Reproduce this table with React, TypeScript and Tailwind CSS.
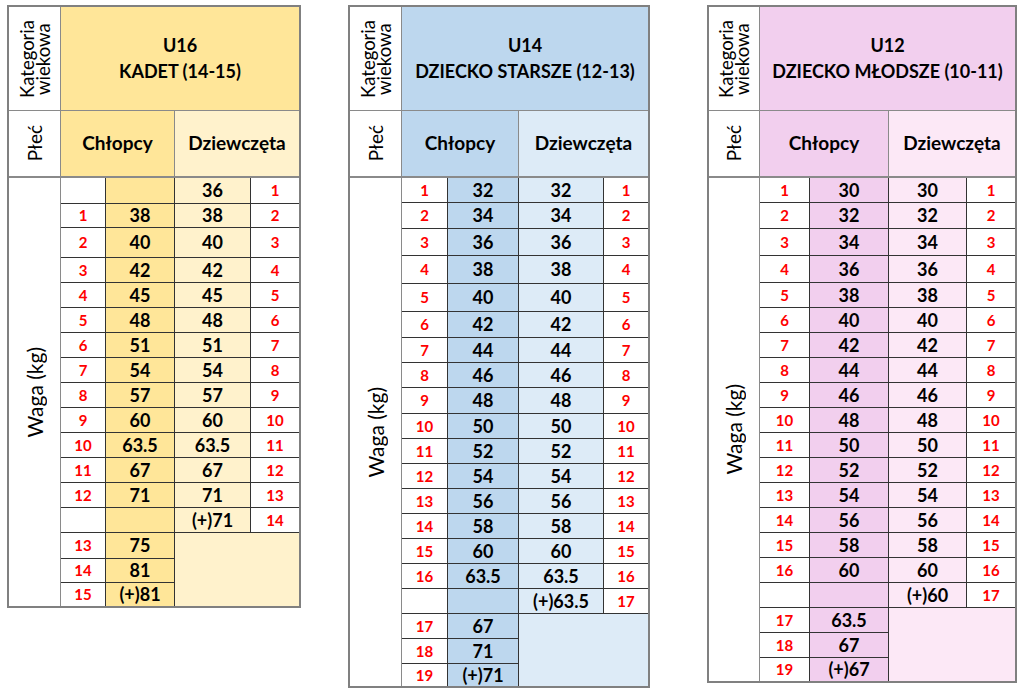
import React from "react";

type Row = [string, string, string, string];

interface Spec {
  title: string;
  subtitle: string;
  gridClass: string;
  spanClass: string;
  headBg: string;
  boysBg: string;
  girlsBg: string;
  rows: Row[];
  extra: [string, string][];
}

const BORDER_DATA = "border-[#333333]";
const BORDER_HEAD = "border-[#8a8a8a]";
const RED = "text-[15px] font-bold text-[#ff0000]";
const VAL = "text-[18px] font-bold text-black";

function Table({ s, className }: { s: Spec; className: string }) {
  const totalExtra = s.extra.length;
  return (
    <div className={`grid border-2 border-[#808080] ${s.gridClass} ${className}`}>
      {/* header row 1 */}
      <div className={`flex items-center justify-center border-r border-b ${BORDER_HEAD} bg-white`}>
        <div className="rotate-180 [writing-mode:vertical-rl] text-[18.5px] leading-[16px] text-center text-black">
          Kategoria
          <br />
          wiekowa
        </div>
      </div>
      <div className={`col-span-4 flex flex-col items-center justify-center pb-[2px] border-b ${BORDER_HEAD} ${s.headBg} text-[18px] leading-[26px] font-bold text-black`}>
        <div>{s.title}</div>
        <div>{s.subtitle}</div>
      </div>
      {/* header row 2 */}
      <div className={`flex items-center justify-center border-r border-b-2 ${BORDER_HEAD} bg-white`}>
        <div className="rotate-180 [writing-mode:vertical-rl] text-[19px] leading-[20px] text-black">Płeć</div>
      </div>
      <div className={`col-span-2 flex items-center justify-center border-r border-b-2 ${BORDER_HEAD} ${s.boysBg} text-[19px] font-bold text-black`}>
        Chłopcy
      </div>
      <div className={`col-span-2 flex items-center justify-center border-b-2 ${BORDER_HEAD} ${s.girlsBg} text-[19px] font-bold text-black`}>
        Dziewczęta
      </div>
      {/* Waga label */}
      <div className={`${s.spanClass} flex items-center justify-center border-r ${BORDER_HEAD} bg-white`}>
        <div className="rotate-180 [writing-mode:vertical-rl] text-[21px] leading-[22px] text-black">Waga (kg)</div>
      </div>
      {s.rows.map((r, i) => (
        <React.Fragment key={`r${i}`}>
          <div className={`flex items-center justify-center border-r border-b ${BORDER_DATA} bg-white ${RED}`}>
            {r[0]}
          </div>
          <div className={`flex items-center justify-center border-r border-b ${BORDER_DATA} ${s.boysBg} ${VAL}`}>
            {r[1]}
          </div>
          <div className={`flex items-center justify-center border-r border-b ${BORDER_DATA} ${s.girlsBg} ${VAL}`}>
            {r[2]}
          </div>
          <div className={`flex items-center justify-center border-b ${BORDER_DATA} bg-white ${RED}`}>
            {r[3]}
          </div>
        </React.Fragment>
      ))}
      {s.extra.map((r, i) => {
        const last = i === totalExtra - 1;
        return (
          <React.Fragment key={`e${i}`}>
            <div className={`flex items-center justify-center border-r ${last ? "" : "border-b"} ${BORDER_DATA} bg-white ${RED}`}>
              {r[0]}
            </div>
            <div className={`flex items-center justify-center border-r ${last ? "" : "border-b"} ${BORDER_DATA} ${s.boysBg} ${VAL}`}>
              {r[1]}
            </div>
            {i === 0 && <div className={`col-span-2 row-span-3 ${s.girlsBg}`} />}
          </React.Fragment>
        );
      })}
    </div>
  );
}

function seq(start: number, count: number, step: number): number[] {
  return Array.from({ length: count }, (_, i) => start + i * step);
}

const u16Pairs: [string, string][] = [
  ["38", "38"],
  ["40", "40"],
  ["42", "42"],
  ["45", "45"],
  ["48", "48"],
  ["51", "51"],
  ["54", "54"],
  ["57", "57"],
  ["60", "60"],
  ["63.5", "63.5"],
  ["67", "67"],
  ["71", "71"],
];

const u16Rows: Row[] = [
  ["", "", "36", "1"],
  ...u16Pairs.map((p, i) => [String(i + 1), p[0], p[1], String(i + 2)] as Row),
  ["", "", "(+)71", "14"],
];

const u14Vals = [...seq(32, 15, 2).map(String), "63.5"];
const u14Rows: Row[] = [
  ...u14Vals.map((v, i) => [String(i + 1), v, v, String(i + 1)] as Row),
  ["", "", "(+)63.5", "17"],
];

const u12Vals = seq(30, 16, 2).map(String);
const u12Rows: Row[] = [
  ...u12Vals.map((v, i) => [String(i + 1), v, v, String(i + 1)] as Row),
  ["", "", "(+)60", "17"],
];

const specs: Spec[] = [
  {
    title: "U16",
    subtitle: "KADET (14-15)",
    gridClass:
      "w-[294px] grid-cols-[52px_45px_69px_76px_48px] grid-rows-[104px_67px_26px_24px_30px_25px_25px_25px_25px_25px_25px_25px_25px_25px_25px_25px_26px_24px_23px]",
    spanClass: "row-span-17",
    headBg: "bg-[#ffe699]",
    boysBg: "bg-[#ffe699]",
    girlsBg: "bg-[#fff2cc]",
    rows: u16Rows,
    extra: [
      ["13", "75"],
      ["14", "81"],
      ["15", "(+)81"],
    ],
  },
  {
    title: "U14",
    subtitle: "DZIECKO STARSZE (12-13)",
    gridClass:
      "w-[302px] grid-cols-[52px_46px_71px_85px_44px] grid-rows-[104px_67px_25px_26px_27px_28px_28px_26px_25px_25px_26px_25px_25px_25px_25px_25px_25px_25px_25px_25px_25px_22px]",
    spanClass: "row-span-20",
    headBg: "bg-[#bdd7ee]",
    boysBg: "bg-[#bdd7ee]",
    girlsBg: "bg-[#ddebf7]",
    rows: u14Rows,
    extra: [
      ["17", "67"],
      ["18", "71"],
      ["19", "(+)71"],
    ],
  },
  {
    title: "U12",
    subtitle: "DZIECKO MŁODSZE (10-11)",
    gridClass:
      "w-[310px] grid-cols-[51px_50px_79px_78px_48px] grid-rows-[104px_67px_25px_26px_27px_27px_25px_25px_25px_25px_25px_25px_25px_25px_25px_25px_25px_25px_25px_25px_25px_23px]",
    spanClass: "row-span-20",
    headBg: "bg-[#f2cfee]",
    boysBg: "bg-[#f2cfee]",
    girlsBg: "bg-[#fce8f6]",
    rows: u12Rows,
    extra: [
      ["17", "63.5"],
      ["18", "67"],
      ["19", "(+)67"],
    ],
  },
];

export default function App() {
  return (
    <div className="flex h-[692px] w-[1024px] items-start bg-white pl-[7px] pt-[5px] [font-family:Lato,'Liberation_Sans',sans-serif]">
      <Table s={specs[0]} className="" />
      <Table s={specs[1]} className="ml-[47px]" />
      <Table s={specs[2]} className="ml-[57px]" />
    </div>
  );
}
